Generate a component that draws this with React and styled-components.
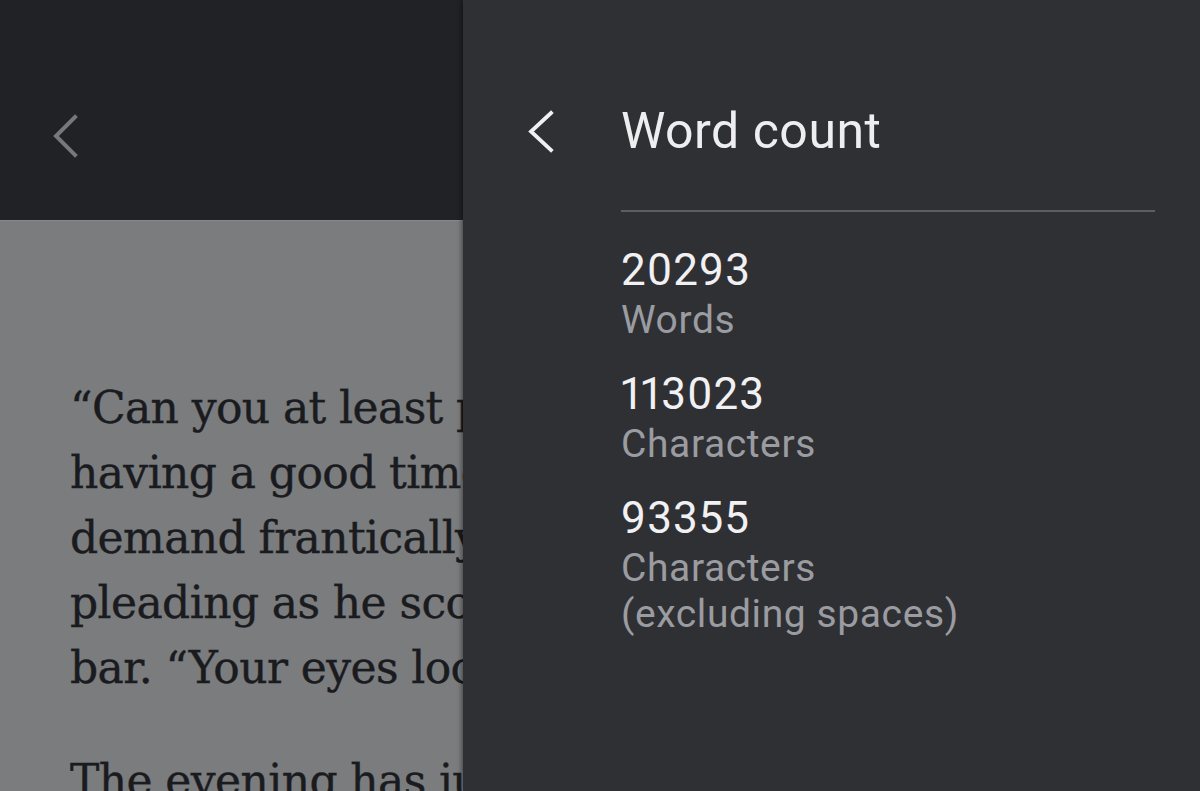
import React from "react";
import styled, { createGlobalStyle } from "styled-components";

const Global = createGlobalStyle`
  html, body { margin: 0; padding: 0; }
  body { width: 1200px; height: 791px; overflow: hidden; background: #7b7c7e; }
  #root { width: 1200px; height: 791px; }
`;

const Screen = styled.div`
  position: relative;
  width: 1200px;
  height: 791px;
  overflow: hidden;
  display: flex;
  flex-direction: column;
`;

const TopBar = styled.header`
  height: 220px;
  flex: none;
  background: #212226;
  display: flex;
  align-items: center;
  padding: 52px 0 0 51px;
  box-sizing: border-box;
`;

const IconButton = styled.button`
  border: 0;
  background: none;
  padding: 0;
  margin: 0;
  display: flex;
  align-items: center;
  justify-content: center;
  width: ${(p) => p.$w}px;
  height: 48px;
  color: ${(p) => p.$color};
  cursor: pointer;
`;

const Page = styled.main`
  flex: 1;
  background: #7b7c7e;
  border-top: 1px solid #86878a;
  padding: 154px 0 0 70px;
  box-sizing: border-box;
`;

const Paragraph = styled.p`
  margin: 0 0 48px;
  font-family: "DejaVu Serif", "Liberation Serif", serif;
  font-size: 44px;
  line-height: 65px;
  color: #1a1b1e;
  white-space: nowrap;
  letter-spacing: -0.6px;
  -webkit-text-stroke: 0.4px #1a1b1e;
`;

const Drawer = styled.aside`
  position: absolute;
  top: 0;
  right: 0;
  bottom: 0;
  width: 737px;
  background: #2f3034;
  box-shadow: -2px 0 4px rgba(0, 0, 0, 0.35);
  padding: 101px 45px 0 0;
  box-sizing: border-box;
  font-family: Roboto, "Noto Sans", sans-serif;
  display: grid;
  grid-template-columns: 158px 1fr;
  align-content: start;
`;

const BackCell = styled.div`
  display: flex;
  align-items: center;
  padding-left: 63px;
  height: 60px;
`;

const Title = styled.h1`
  margin: 0;
  font-weight: 400;
  font-size: 50px;
  line-height: 60px;
  color: #eeeef0;
  letter-spacing: 0.5px;
`;

const Content = styled.div`
  grid-column: 2;
  display: flex;
  flex-direction: column;
`;

const Divider = styled.hr`
  margin: 49px 0 32px;
  border: 0;
  height: 2px;
  background: #5d5e62;
`;

const Stat = styled.div`
  display: flex;
  flex-direction: column;
  margin-bottom: 25px;
`;

const Value = styled.div`
  font-size: 44px;
  line-height: 52px;
  color: #f1f1f3;
  letter-spacing: 1px;
  font-feature-settings: "pnum" 1;
`;

const Label = styled.div`
  margin-top: 1px;
  font-size: 39px;
  line-height: 46px;
  color: #9b9ca1;
  letter-spacing: 0.6px;
`;

const Chevron = ({ size = 26, height = 42, stroke = 3.8 }) => (
  <svg width={size} height={height} viewBox={`0 0 ${size} ${height}`} fill="none">
    <path
      d={`M${size - 3} 3 L4 ${height / 2} L${size - 3} ${height - 3}`}
      stroke="currentColor"
      strokeWidth={stroke}
      strokeLinecap="square"
      strokeLinejoin="miter"
    />
  </svg>
);

const stats = [
  { value: "20293", label: ["Words"] },
  { value: "113023", label: ["Characters"] },
  { value: "93355", label: ["Characters", "(excluding spaces)"] },
];

export default function App() {
  return (
    <>
      <Global />
      <Screen>
        <TopBar>
          <IconButton $w={28} $color="#77787b" aria-label="Back">
            <Chevron size={26} height={44} stroke={4} />
          </IconButton>
        </TopBar>
        <Page>
          <Paragraph>
            “Can you at least pretend you’re
            <br />
            having a good time?” I hear Sam
            <br />
            demand frantically, his voice
            <br />
            pleading as he scoots closer at the
            <br />
            bar. “Your eyes look like you’re
          </Paragraph>
          <Paragraph>The evening has just begun</Paragraph>
        </Page>
        <Drawer>
          <BackCell>
            <IconButton $w={28} $color="#f0f0f2" aria-label="Back">
              <Chevron size={27} height={43} stroke={3.8} />
            </IconButton>
          </BackCell>
          <Title>Word count</Title>
          <Content>
            <Divider />
            {stats.map((s) => (
              <Stat key={s.value}>
                <Value>{s.value}</Value>
                <Label>
                  {s.label.map((l, i) => (
                    <React.Fragment key={i}>
                      {i > 0 && <br />}
                      {l}
                    </React.Fragment>
                  ))}
                </Label>
              </Stat>
            ))}
          </Content>
        </Drawer>
      </Screen>
    </>
  );
}
